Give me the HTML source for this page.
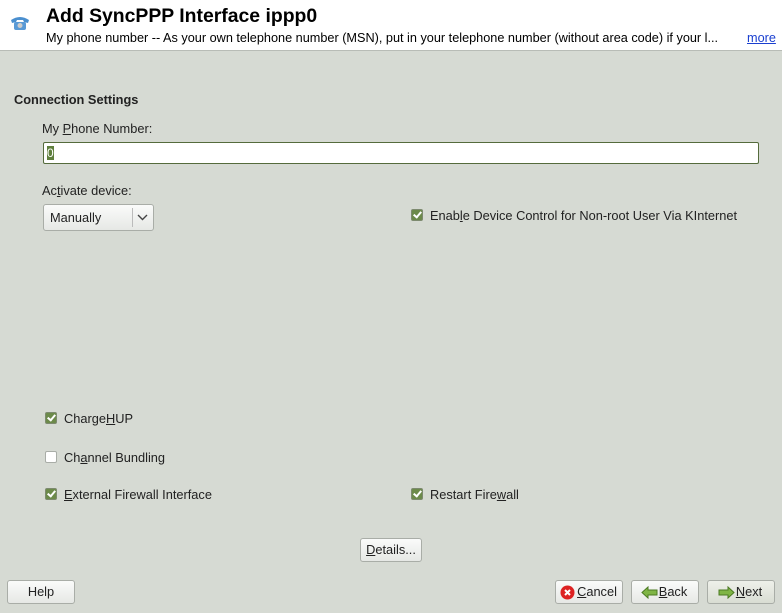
<!DOCTYPE html>
<html><head><style>
body{margin:0;width:782px;height:613px;background:#d6dad3;font-family:"Liberation Sans",sans-serif;font-size:12.8px;color:#222;position:relative;overflow:hidden}
.a{position:absolute}
.hdr{left:0;top:0;width:782px;height:50px;background:#fff;border-bottom:1px solid #b8bcb6}
.btn{position:absolute;height:24px;border:1px solid #a9ada7;border-radius:3px;background:linear-gradient(#fafbfa,#e6e8e5);box-sizing:border-box;font-size:12.8px;text-align:center;line-height:22px}
.cb{position:absolute;width:12px;height:12px;border:1px solid #7d8a6f;border-radius:2px;background:#6c8a4a;box-sizing:border-box}
.cb:after{content:"";position:absolute;left:3px;top:0px;width:3px;height:6px;border:solid #fff;border-width:0 2px 2px 0;transform:rotate(40deg)}
.cb.off{background:#fff;border-color:#a9ada7}
.cb.off:after{display:none}
u{text-decoration:underline}
</style></head><body>
<div class="a hdr"></div>
<svg class="a" style="left:9px;top:14px" width="22" height="18" viewBox="0 0 22 18"><path d="M2 6 Q11 0 20 6 L19 9 L15 8 L14 6 L8 6 L7 8 L3 9Z" fill="#4a8fcf"/><rect x="5" y="8" width="12" height="8" rx="2" fill="#5a9ad6"/><circle cx="11" cy="11.5" r="2.5" fill="#ccc"/></svg>
<div class="a" style="left:46px;top:5px;font-size:19.4px;font-weight:bold;color:#000">Add SyncPPP Interface ippp0</div>
<div class="a" style="left:46px;top:31px;font-size:12.7px;color:#000">My phone number -- As your own telephone number (MSN), put in your telephone number (without area code) if your l...</div>
<div class="a" style="left:747px;top:31px;font-size:12.7px;color:#1a3fd0;text-decoration:underline">more</div>
<div class="a" style="left:14px;top:92px;font-weight:bold">Connection Settings</div>
<div class="a" style="left:42px;top:121px">My <u>P</u>hone Number:</div>
<div class="a" style="left:43px;top:142px;width:716px;height:22px;background:#fff;border:1px solid #556b3c;box-sizing:border-box;border-radius:2px"><div style="position:absolute;left:3px;top:3px;width:7px;height:14px;background:#5f7f3d;color:#fff;font-size:12px;line-height:14px">0</div></div>
<div class="a" style="left:42px;top:183px">Ac<u>t</u>ivate device:</div>
<div class="btn" style="left:43px;top:204px;width:111px;height:27px;text-align:left;padding-left:6px;line-height:25px">Manually<div style="position:absolute;left:88px;top:3px;width:1px;height:19px;background:#bbb"></div><svg style="position:absolute;left:93px;top:9px" width="11" height="7"><path d="M1 1 L5.5 5.5 L10 1" stroke="#444" stroke-width="1.4" fill="none"/></svg></div>
<div class="cb" style="left:411px;top:209px"></div>
<div class="a" style="left:430px;top:208px">Enab<u>l</u>e Device Control for Non-root User Via KInternet</div>
<div class="cb" style="left:45px;top:412px"></div>
<div class="a" style="left:64px;top:411px">Charge<u>H</u>UP</div>
<div class="cb off" style="left:45px;top:451px"></div>
<div class="a" style="left:64px;top:450px">Ch<u>a</u>nnel Bundling</div>
<div class="cb" style="left:45px;top:488px"></div>
<div class="a" style="left:64px;top:487px"><u>E</u>xternal Firewall Interface</div>
<div class="cb" style="left:411px;top:488px"></div>
<div class="a" style="left:430px;top:487px">Restart Fire<u>w</u>all</div>
<div class="btn" style="left:360px;top:538px;width:62px"><u>D</u>etails...</div>
<div class="btn" style="left:7px;top:580px;width:68px">Help</div>
<div class="btn" style="left:555px;top:580px;width:68px;padding-left:16px"><svg style="position:absolute;left:4px;top:4px" width="15" height="15"><circle cx="7.5" cy="7.5" r="7" fill="#d22"/><path d="M5 5L10 10M10 5L5 10" stroke="#fff" stroke-width="2"/></svg><u>C</u>ancel</div>
<div class="btn" style="left:631px;top:580px;width:68px;padding-left:16px"><svg style="position:absolute;left:9px;top:5px" width="17" height="13"><path d="M1 6.5L7 1V4H16V9H7V12Z" fill="#7fb545" stroke="#4b7a22"/></svg><u>B</u>ack</div>
<div class="btn" style="left:707px;top:580px;width:68px;padding-left:16px;background:linear-gradient(#eef0ea,#d9ddd3)"><svg style="position:absolute;left:10px;top:5px" width="17" height="13"><path d="M16 6.5L10 1V4H1V9H10V12Z" fill="#7fb545" stroke="#4b7a22"/></svg><u>N</u>ext</div>
</body></html>
